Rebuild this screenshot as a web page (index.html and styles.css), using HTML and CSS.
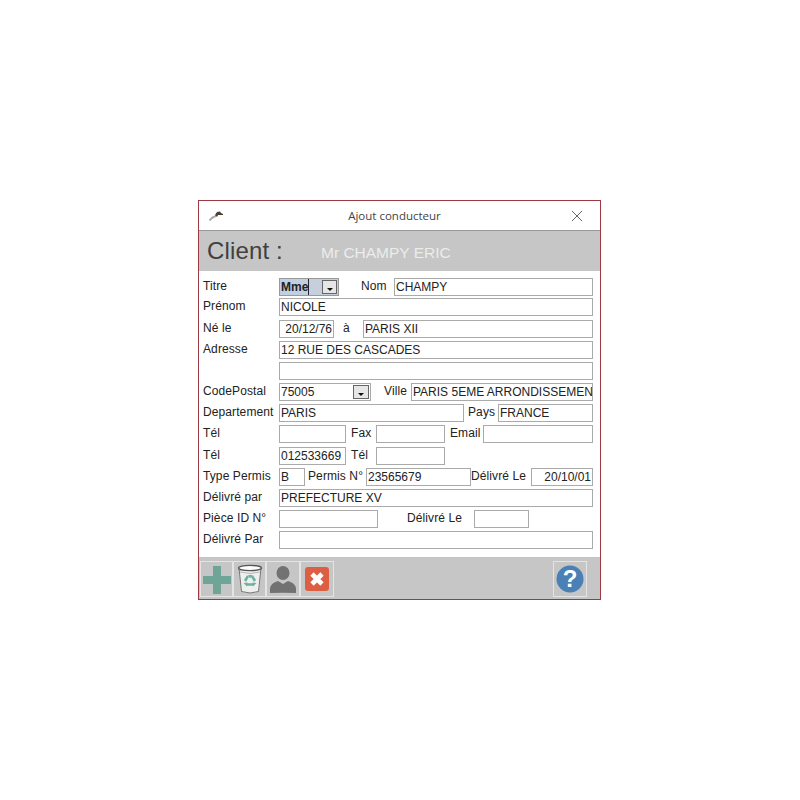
FILE: index.html
```html
<!DOCTYPE html>
<html>
<head>
<meta charset="utf-8">
<title>Ajout conducteur</title>
<link rel="stylesheet" href="styles.css">
</head>
<body>
<div class="window">
  <div class="titlebar">
    <svg class="key" width="16" height="12" viewBox="0 0 16 12"><path d="M1.5 10.5 Q4 7 8 6" stroke="#a8a8a8" stroke-width="2" fill="none"/><path d="M7 5 L9 2 L12 1.5 L13 3 L15 4 L15 5 L10 5 L9 7 Z" fill="#4a3f35"/></svg>
    <span class="wintitle">Ajout conducteur</span>
    <svg class="close" width="12" height="12" viewBox="0 0 12 12"><path d="M1 1 L11 11 M11 1 L1 11" stroke="#666" stroke-width="1" fill="none"/></svg>
  </div>
  <div class="header">
    <span class="client">Client :</span>
    <span class="clientname">Mr CHAMPY ERIC</span>
  </div>
  <div class="form">
    <div class="row">
      <label class="lbl">Titre</label>
      <div class="combo w60 titre"><span class="sel">Mme</span><span class="arrow"></span></div>
      <label class="lbl2 ml22 w33">Nom</label>
      <div class="field grow">CHAMPY</div>
    </div>
    <div class="row r20">
      <label class="lbl">Prénom</label>
      <div class="field grow">NICOLE</div>
    </div>
    <div class="row r22">
      <label class="lbl">Né le</label>
      <div class="field w55 right">20/12/76</div>
      <label class="lbl2 ml9 w20">à</label>
      <div class="field grow">PARIS XII</div>
    </div>
    <div class="row r21">
      <label class="lbl">Adresse</label>
      <div class="field grow">12 RUE DES CASCADES</div>
    </div>
    <div class="row r21">
      <label class="lbl"></label>
      <div class="field grow"></div>
    </div>
    <div class="row r21">
      <label class="lbl">CodePostal</label>
      <div class="combo w92">75005<span class="arrow"></span></div>
      <label class="lbl2 ml13 w27">Ville</label>
      <div class="field grow">PARIS 5EME ARRONDISSEMEN</div>
    </div>
    <div class="row r21">
      <label class="lbl">Departement</label>
      <div class="field w185">PARIS</div>
      <label class="lbl2 ml4 w30">Pays</label>
      <div class="field grow">FRANCE</div>
    </div>
    <div class="row r21">
      <label class="lbl">Tél</label>
      <div class="field w67"></div>
      <label class="lbl2 ml5 w25">Fax</label>
      <div class="field w69"></div>
      <label class="lbl2 ml5 w33">Email</label>
      <div class="field grow"></div>
    </div>
    <div class="row r22">
      <label class="lbl">Tél</label>
      <div class="field w67">012533669</div>
      <label class="lbl2 ml5 w25">Tél</label>
      <div class="field w69"></div>
    </div>
    <div class="row r21">
      <label class="lbl">Type Permis</label>
      <div class="field w26">B</div>
      <label class="lbl2 ml3 w58">Permis N°</label>
      <div class="field w105">23565679</div>
      <label class="lbl2 w60">Délivré Le</label>
      <div class="field grow right">20/10/01</div>
    </div>
    <div class="row r21">
      <label class="lbl">Délivré par</label>
      <div class="field grow">PREFECTURE XV</div>
    </div>
    <div class="row r21">
      <label class="lbl">Pièce ID N°</label>
      <div class="field w99"></div>
      <label class="lbl2 ml29 w67">Délivré Le</label>
      <div class="field w55"></div>
    </div>
    <div class="row r21">
      <label class="lbl">Délivré Par</label>
      <div class="field grow"></div>
    </div>
  </div>
  <div class="footer">
    <button class="tool w32">
      <svg class="plus" width="28" height="28" viewBox="0 0 28 28"><path d="M10 0 H18 V10 H28 V18 H18 V28 H10 V18 H0 V10 H10 Z" fill="#6fa596"/></svg>
    </button>
    <button class="tool w33">
      <svg width="26" height="30" viewBox="0 0 26 30">
        <path d="M2 4 L4.5 27.5 Q13 30.5 21.5 27.5 L24 4 Z" fill="#eef0ee" stroke="#777" stroke-width="1"/>
        <ellipse cx="13" cy="4" rx="11.5" ry="2.6" fill="#fdfdfd" stroke="#555" stroke-width="1.3"/>
        <path d="M3 8 Q13 11 23 8" stroke="#b5b5b5" fill="none"/>
        <path d="M11 12 L8 17 M15 12 L18 17 M9.5 20.5 H16.5" stroke="#6fb0a0" stroke-width="2.6" fill="none"/>
        <path d="M11 11 L15.5 11 L13 14.5 Z M6.5 19 L10.5 18.5 L10 22.5 Z M19.5 19 L15.5 18.5 L16 22.5 Z" fill="#6fb0a0"/>
      </svg>
    </button>
    <button class="tool w34">
      <svg width="26" height="27" viewBox="0 0 26 27"><ellipse cx="13" cy="7" rx="6.5" ry="7" fill="#727272"/><path d="M0 27 V22 Q1 17 8 15 L13 18 L18 15 Q25 17 26 22 V27 Q13 26.5 0 27 Z" fill="#727272"/></svg>
    </button>
    <button class="tool w34">
      <svg width="26" height="26" viewBox="0 0 26 26"><rect x="1" y="1" width="24" height="24" rx="3" fill="#dd5f43"/><path d="M8 8 L18 18 M18 8 L8 18" stroke="#fff" stroke-width="4.6" fill="none"/></svg>
    </button>
    <button class="tool w34 help">
      <svg width="28" height="28" viewBox="0 0 28 28"><circle cx="14" cy="14" r="13.5" fill="#4a80b5"/><text x="14" y="22" text-anchor="middle" class="helpmark">?</text></svg>
    </button>
  </div>
</div>
</body>
</html>
```

FILE: styles.css
```css
body {
	margin: 0;
	background: #fff;
	font-family: "Liberation Sans", Arial, sans-serif;
	font-size: 12px;
	color: #222;
}
.window {
	width: 401px;
	height: 398px;
	margin: 200px 0 0 198px;
	border: 1px solid #9c3a44;
	display: flex;
	flex-direction: column;
	background: #fff;
}
.titlebar {
	height: 29px;
	display: flex;
	align-items: center;
	justify-content: center;
	position: relative;
	border-bottom: 1px solid #999;
}
.wintitle {
	font-family: "Open Sans", sans-serif;
	font-size: 11.5px;
	color: #444;
	margin-left: -10px;
}
.key {
	position: absolute;
	left: 9px;
	top: 9px;
}
.close {
	position: absolute;
	right: 17px;
	top: 9px;
}
.header {
	height: 40px;
	background: #c6c6c6;
	display: flex;
	align-items: center;
	flex-shrink: 0;
}
.client {
	font-size: 24px;
	letter-spacing: 0.15px;
	color: #404040;
	margin-left: 8px;
	width: 114px;
}
.clientname {
	font-size: 15.5px;
	color: #ececec;
	padding-top: 3px;
}
.form {
	flex: 1;
	padding: 7px 7px 0 4px;
}
.row {
	display: flex;
	height: 18px;
}
.r20 { margin-top: 2px; }
.r21 { margin-top: 3px; }
.r22 { margin-top: 4px; }
.lbl, .lbl2 {
	line-height: 15px;
	height: 15px;
	margin-top: 1px;
	letter-spacing: 0.1px;
	white-space: nowrap;
	flex-shrink: 0;
}
.lbl { width: 76px; }
.field, .combo {
	box-sizing: border-box;
	height: 18px;
	border: 1px solid #aaa;
	background: #fff;
	line-height: 16px;
	padding: 0 0 0 1px;
	white-space: nowrap;
	overflow: hidden;
	flex-shrink: 0;
}
.grow { flex: 1; }
.right { text-align: right; padding: 0 1px 0 0; }
.combo {
	display: flex;
	justify-content: space-between;
}
.titre {
	background: #c6d0dc;
	padding: 0;
	border-color: #999;
}
.sel {
	font-weight: bold;
	background: #c2cfe0;
	border-right: 1px solid #223;
	padding: 0 0 0 1px;
	margin-right: 12px;
}
.arrow {
	width: 16px;
	height: 14px;
	margin: 1px;
	box-sizing: border-box;
	border: 1px solid #666;
	background: #e6e6e6;
	position: relative;
}
.arrow::after {
	content: "";
	position: absolute;
	left: 3.5px;
	top: 7px;
	border: 3.5px solid transparent;
	border-top: 3px solid #111;
	border-bottom: 0;
}
.w20 { width: 20px; }
.w25 { width: 25px; }
.w26 { width: 26px; }
.w27 { width: 27px; }
.w30 { width: 30px; }
.w33 { width: 33px; }
.w55 { width: 55px; }
.w58 { width: 58px; }
.w60 { width: 60px; }
.w67 { width: 67px; }
.w69 { width: 69px; }
.w92 { width: 92px; }
.w99 { width: 99px; }
.w105 { width: 105px; }
.w185 { width: 185px; }
.ml3 { margin-left: 3px; }
.ml4 { margin-left: 4px; }
.ml5 { margin-left: 5px; }
.ml9 { margin-left: 9px; }
.ml13 { margin-left: 13px; }
.ml22 { margin-left: 22px; }
.ml29 { margin-left: 29px; }
.footer {
	height: 42px;
	background: #c6c6c6;
	display: flex;
	padding: 4px 0 0 1px;
	box-sizing: border-box;
	flex-shrink: 0;
}
.tool {
	height: 36px;
	padding: 0;
	margin: 0;
	box-sizing: border-box;
	border: 1px solid #e4e4e4;
	background: #c6c6c6;
	display: flex;
	align-items: center;
	justify-content: center;
	overflow: visible;
}
.tool.w32 { width: 33px; }
.tool.w33 { width: 33px; }
.tool.w34 { width: 34px; }
.plus { flex-shrink: 0; margin: 2px 0 0 1px; }
.help { margin-left: 219px; }
.helpmark {
	font-family: "Liberation Sans", sans-serif;
	font-size: 24px;
	font-weight: bold;
	fill: #fff;
}
```
